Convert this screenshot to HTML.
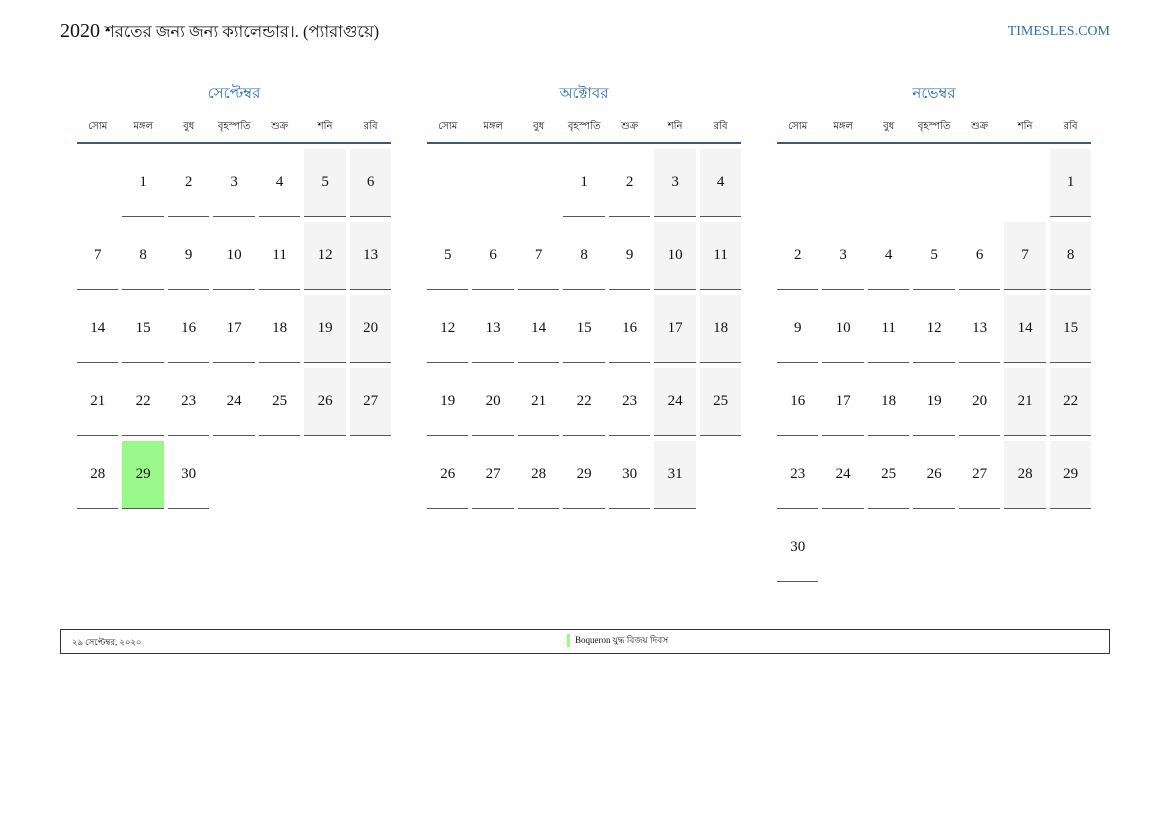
<!DOCTYPE html>
<html><head><meta charset="utf-8"><style>
body{margin:0;width:1169px;height:827px;background:#fff;font-family:"Liberation Serif",serif;color:#111;position:relative;overflow:hidden}
.title{position:absolute;left:60px;top:19px;font-size:20px}
.title .bn{font-size:16.4px}
.site{position:absolute;right:59px;top:24px;font-size:14px;color:#2e6db0}
.m{position:absolute;top:82px;width:314px}
.mn{text-align:center;color:#2e6db0;font-size:15px;height:22px}
.wd{display:grid;grid-template-columns:repeat(7,41.4px);column-gap:4.1px;font-size:10px;text-align:center;margin-top:15px;height:18px;border-bottom:2px solid #3a5a80;padding-bottom:5px;width:314px}
.g{display:grid;grid-template-columns:repeat(7,41.4px);grid-auto-rows:68px;column-gap:4.1px;row-gap:5px;margin-top:5px}
.g div{font-size:15px;display:flex;align-items:center;justify-content:center}
.g .d{border-bottom:1.5px solid #555;box-sizing:border-box}
.g .w{background:#f4f4f4}
.g .h{background:#9af78a}
.foot{position:absolute;left:60px;top:629px;width:1048px;height:23px;border:1.5px solid #333;font-size:9px}
.foot .a{position:absolute;left:11px;top:6px;font-size:8.5px}
.foot .b{position:absolute;left:506px;top:4px;border-left:3px solid #9af78a;padding-left:5px;line-height:13px}
</style></head><body>
<div class="title">2020 <span class="bn">শরতের জন্য জন্য ক্যালেন্ডার।. (প্যারাগুয়ে)</span></div>
<div class="site">TIMESLES.COM</div>

<div class="m" style="left:77px"><div class="mn">সেপ্টেম্বর</div>
<div class="wd"><span>সোম</span><span>মঙ্গল</span><span>বুধ</span><span>বৃহস্পতি</span><span>শুক্র</span><span>শনি</span><span>রবি</span></div>
<div class="g">
<div></div><div class="d">1</div><div class="d">2</div><div class="d">3</div><div class="d">4</div><div class="d w">5</div><div class="d w">6</div>
<div class="d">7</div><div class="d">8</div><div class="d">9</div><div class="d">10</div><div class="d">11</div><div class="d w">12</div><div class="d w">13</div>
<div class="d">14</div><div class="d">15</div><div class="d">16</div><div class="d">17</div><div class="d">18</div><div class="d w">19</div><div class="d w">20</div>
<div class="d">21</div><div class="d">22</div><div class="d">23</div><div class="d">24</div><div class="d">25</div><div class="d w">26</div><div class="d w">27</div>
<div class="d">28</div><div class="d h">29</div><div class="d">30</div>
</div></div>

<div class="m" style="left:427px"><div class="mn">অক্টোবর</div>
<div class="wd"><span>সোম</span><span>মঙ্গল</span><span>বুধ</span><span>বৃহস্পতি</span><span>শুক্র</span><span>শনি</span><span>রবি</span></div>
<div class="g">
<div></div><div></div><div></div><div class="d">1</div><div class="d">2</div><div class="d w">3</div><div class="d w">4</div>
<div class="d">5</div><div class="d">6</div><div class="d">7</div><div class="d">8</div><div class="d">9</div><div class="d w">10</div><div class="d w">11</div>
<div class="d">12</div><div class="d">13</div><div class="d">14</div><div class="d">15</div><div class="d">16</div><div class="d w">17</div><div class="d w">18</div>
<div class="d">19</div><div class="d">20</div><div class="d">21</div><div class="d">22</div><div class="d">23</div><div class="d w">24</div><div class="d w">25</div>
<div class="d">26</div><div class="d">27</div><div class="d">28</div><div class="d">29</div><div class="d">30</div><div class="d w">31</div>
</div></div>

<div class="m" style="left:777px"><div class="mn">নভেম্বর</div>
<div class="wd"><span>সোম</span><span>মঙ্গল</span><span>বুধ</span><span>বৃহস্পতি</span><span>শুক্র</span><span>শনি</span><span>রবি</span></div>
<div class="g">
<div></div><div></div><div></div><div></div><div></div><div></div><div class="d w">1</div>
<div class="d">2</div><div class="d">3</div><div class="d">4</div><div class="d">5</div><div class="d">6</div><div class="d w">7</div><div class="d w">8</div>
<div class="d">9</div><div class="d">10</div><div class="d">11</div><div class="d">12</div><div class="d">13</div><div class="d w">14</div><div class="d w">15</div>
<div class="d">16</div><div class="d">17</div><div class="d">18</div><div class="d">19</div><div class="d">20</div><div class="d w">21</div><div class="d w">22</div>
<div class="d">23</div><div class="d">24</div><div class="d">25</div><div class="d">26</div><div class="d">27</div><div class="d w">28</div><div class="d w">29</div>
<div class="d">30</div>
</div></div>

<div class="foot"><span class="a">২৯ সেপ্টেম্বর, ২০২০</span><span class="b">Boqueron যুদ্ধ বিজয় দিবস</span></div>
</body></html>
